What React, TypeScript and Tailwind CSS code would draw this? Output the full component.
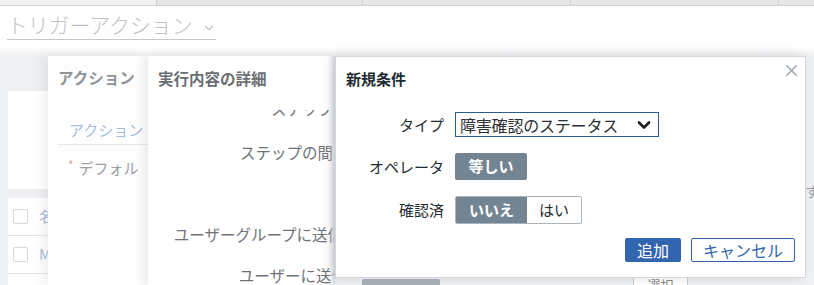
import { ChevronDown, X } from "lucide-react"

const jp = { fontFamily: '"Noto Sans CJK JP", "Noto Sans", sans-serif' }

function BgRow({ text }: { text: string }) {
  return (
    <div className="flex h-[38px] items-center gap-[11px] border-b border-[#e4e6e9] bg-white pl-[5px]">
      <span className="h-[15px] w-[15px] rounded-[2px] border border-[#d6d9dd] bg-white" />
      <span className="text-[15px] text-[#a9bedb]">{text}</span>
    </div>
  )
}

export default function App() {
  return (
    <div className="relative h-[285px] w-[814px] overflow-hidden bg-[#eef0f3]" style={jp}>
      {/* tab strip */}
      <div className="flex h-[6px] border-b border-[#d3d3d3]">
        <div className="w-[157px] border-r border-[#d0d0d0] bg-[#f0f0f0]" />
        <div className="w-[206px] border-r border-[#d0d0d0] bg-[#e6e6e6]" />
        <div className="w-[208px] border-r border-[#d0d0d0] bg-[#e6e6e6]" />
        <div className="w-[208px] border-r border-[#d0d0d0] bg-[#e6e6e6]" />
        <div className="flex-1 bg-[#e6e6e6]" />
      </div>

      {/* page header */}
      <div className="h-[40px] bg-white pl-[7px] pt-[5px]">
        <div className="flex w-[209px] items-center justify-between border-b border-[#c8c8c8] pb-[1px]">
          <span className="text-[21px] font-light leading-[27px] tracking-[-0.2px] text-[#c2c2c2]">トリガーアクション</span>
          <ChevronDown className="mt-[6px] h-[14px] w-[14px] text-[#c4c4c4]" strokeWidth={2} />
        </div>
      </div>
      <div className="h-[10px] bg-gradient-to-b from-white to-[#eef0f3]" />

      {/* background content */}
      <div className="pl-[8px] pt-[35px]">
        <div className="h-[98px] w-[60px] bg-white" />
        <div className="mt-[9px] w-[60px]">
          <BgRow text="名" />
          <BgRow text="M" />
          <BgRow text="" />
        </div>
      </div>
      <div className="absolute left-[805px] top-[181px] w-[9px] overflow-hidden text-[14px] text-[#9aa0a6]">す</div>

      {/* panel 1 */}
      <div className="absolute left-[48px] top-[56px] h-[229px] w-[100px] bg-[#fdfdfd] shadow-[-6px_0_10px_rgba(0,0,0,0.06)]">
        <div className="pl-[10px] pt-[10px] text-[15.5px] font-bold leading-[22px] text-[#8f9398]">アクション</div>
        <div className="ml-[10px] mt-[31px] border-b border-[#e6e8eb] pb-[3px] pl-[11px] text-[15px] leading-[22px] text-[#a7bcdc] whitespace-nowrap">
          アクション
        </div>
        <div className="mt-[12px] flex items-start gap-[5px] pl-[20px] whitespace-nowrap">
          <span className="text-[12px] leading-[16px] text-[#f0a0a0]">*</span>
          <span className="text-[15px] leading-[22px] text-[#9a9ea3]">デフォル</span>
        </div>
      </div>

      {/* panel 2 */}
      <div className="absolute left-[148px] top-[56px] h-[229px] w-[187px] overflow-hidden bg-white shadow-[-5px_0_8px_rgba(0,0,0,0.07)]">
        <div className="pl-[10px] pt-[11px] text-[15.5px] font-bold leading-[22px] text-[#6b6f74]">実行内容の詳細</div>
        <div className="flex flex-col items-end text-[15.5px] leading-[22px] text-[#6f7377] whitespace-nowrap">
          <div className="mr-[2px] mt-[21px] h-[7px] overflow-hidden">
            <div className="-mt-[13px]">ステップ</div>
          </div>
          <div className="mr-[2px] mt-[24px]">ステップの間</div>
          <div className="-mr-[8px] mt-[60px]">ユーザーグループに送信</div>
          <div className="-mr-[12px] mt-[19px]">ユーザーに送信</div>
        </div>
        <div className="absolute right-0 top-0 h-full w-[6px] bg-gradient-to-r from-transparent to-[#dde0e4]" />
      </div>

      {/* bits under modal */}
      <div className="absolute left-[362px] top-[279px] h-[10px] w-[78px] rounded-[2px] bg-[#aab2b9]" />
      <div className="absolute left-[633px] top-[276px] h-[14px] w-[55px] overflow-hidden border border-[#c8ccd0] bg-white text-center text-[13px] leading-[16px] text-[#888]">
        選択
      </div>

      {/* new condition modal */}
      <div className="absolute left-[335px] top-[56px] h-[222px] w-[471px] border border-[#d4d7db] bg-white shadow-[-4px_0_10px_rgba(0,0,0,0.12)]">
        <div className="pl-[10px] pt-[11px] text-[15px] font-bold leading-[22px] text-[#1f2c33]">新規条件</div>
        <button className="absolute right-[4px] top-[4px] text-[#a5adb4]">
          <X className="h-[19px] w-[19px]" strokeWidth={2.2} />
        </button>

        <div className="mt-[22px] flex flex-col gap-[16px] text-[15px] text-[#1f2c33]">
          <div className="flex items-center">
            <div className="w-[108px] text-right leading-[22px]">タイプ</div>
            <div className="ml-[11px] flex h-[25px] w-[204px] items-center justify-between border border-[#2d5b93] pl-[4px] pr-[4px]">
              <span className="text-[16px] leading-[22px] tracking-[-0.2px] text-[#2b2f33]">障害確認のステータス</span>
              <ChevronDown className="h-[20px] w-[20px] text-[#222]" strokeWidth={3.2} />
            </div>
          </div>
          <div className="flex items-center">
            <div className="w-[108px] text-right leading-[22px]">オペレータ</div>
            <div className="ml-[11px] flex h-[27px] w-[72px] items-center justify-center rounded-[2px] bg-[#738592] text-[15px] font-bold text-white">
              等しい
            </div>
          </div>
          <div className="flex items-center">
            <div className="w-[108px] text-right leading-[22px]">確認済</div>
            <div className="ml-[11px] flex h-[28px] overflow-hidden rounded-[2px] border border-[#a9b4bd]">
              <div className="flex w-[71px] items-center justify-center bg-[#738592] text-[15px] font-bold text-white">いいえ</div>
              <div className="flex w-[54px] items-center justify-center bg-white text-[15px] text-[#1f2c33]">はい</div>
            </div>
          </div>
        </div>

        <div className="absolute bottom-[15px] right-[10px] flex gap-[10px]">
          <button className="flex h-[24px] w-[56px] items-center justify-center rounded-[2px] bg-[#3165ae] text-[16px] leading-none text-white">
            追加
          </button>
          <button className="flex h-[24px] w-[104px] items-center justify-center rounded-[2px] border border-[#3165ae] bg-white text-[16px] leading-none text-[#3165ae]">
            キャンセル
          </button>
        </div>
      </div>
    </div>
  )
}
